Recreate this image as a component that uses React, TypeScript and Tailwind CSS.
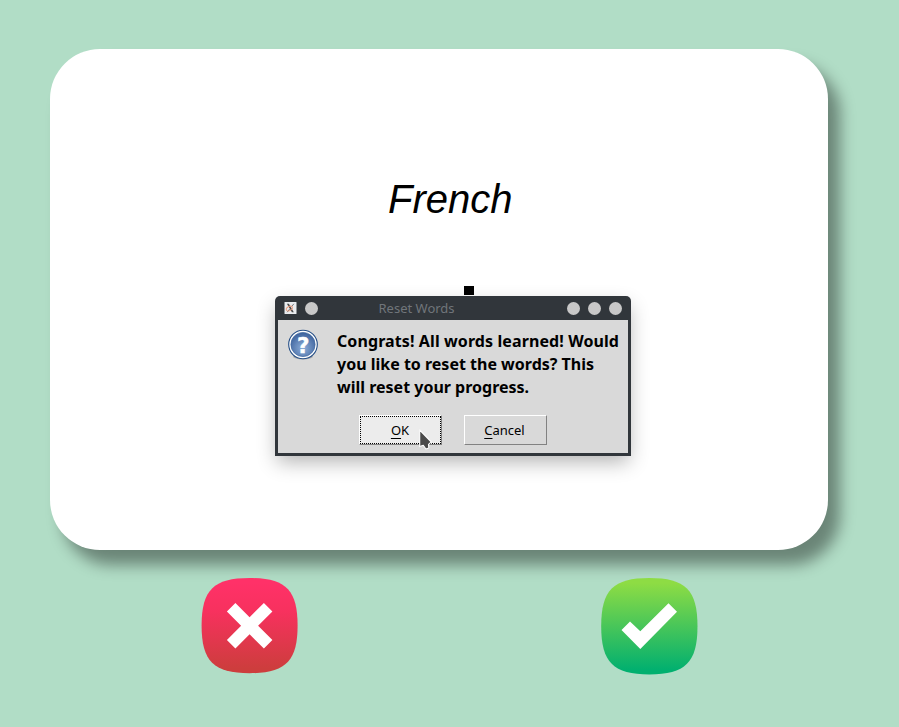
function Dot() {
  return <span className="block size-[13px] rounded-full bg-[#c8c8c8]" />;
}

function ResetDialog() {
  return (
    <div
      role="dialog"
      aria-label="Reset Words"
      className="absolute left-[275px] top-[296px] flex h-[160px] w-[356px] flex-col rounded-t-[5px] bg-[#31363b] px-[3px] pb-[3px] font-['Noto_Sans',sans-serif] shadow-[0_8px_20px_-2px_rgba(0,0,0,0.3)]"
    >
      <div className="flex h-6 shrink-0 items-center pl-[6px] pr-[6px]">
        <svg width="13" height="12" viewBox="-0.5 0 13 12" className="shrink-0">
          <rect width="12" height="12" rx="0.6" fill="#e9ecef" />
          <path d="M2.4 1.8h1.9l5 8.4H7.4z" fill="#4a4a4a" />
          <path d="M9.4 1.8 6.7 5M5.2 7 2.6 10.2" stroke="#4a4a4a" strokeWidth="0.7" />
          <ellipse cx="4.8" cy="6.6" rx="3.3" ry="2.1" transform="rotate(-28 4.8 6.6)" fill="none" stroke="#ee9c7c" strokeWidth="0.9" />
        </svg>
        <span className="ml-[8px]">
          <Dot />
        </span>
        <span className="ml-[60.5px] whitespace-nowrap text-[13px] leading-6 text-[#70757a]">Reset Words</span>
        <div className="ml-auto flex gap-2">
          <Dot />
          <Dot />
          <Dot />
        </div>
      </div>
      <div className="flex flex-1 flex-col bg-[#d9d9d9]">
        <div className="flex pl-[9px] pt-[9px]">
          <svg width="32" height="32" viewBox="0 0 32 32" className="shrink-0">
            <defs>
              <radialGradient id="help" cx="0.5" cy="0.65" r="0.65">
                <stop offset="0" stopColor="#8eafd9" />
                <stop offset="1" stopColor="#3b609b" />
              </radialGradient>
            </defs>
            <ellipse cx="16" cy="27.5" rx="10" ry="3" fill="#000" opacity="0.2" />
            <circle cx="16" cy="15.5" r="14.3" fill="#fff" stroke="#234d86" strokeWidth="1.1" />
            <circle cx="16" cy="15.5" r="12.1" fill="url(#help)" stroke="#3e659e" strokeWidth="0.7" />
            <text x="16.2" y="23.6" textAnchor="middle" fill="#fff" stroke="#fff" strokeWidth="0.4" fontFamily="DejaVu Sans" fontWeight="700" fontSize="21.5">?</text>
          </svg>
          <p className="ml-[18px] whitespace-nowrap pt-px text-[16px] font-bold leading-[23px] text-black">
            <span className="tracking-[0.1px]">Congrats! All words learned! Would</span>
            <br />
            you like to reset the words? This
            <br />
            will reset your progress.
          </p>
        </div>
        <div className="mt-[16px] flex gap-[22px] pl-[81px] text-[13px] leading-none text-black">
          <button className="h-[30px] w-[83px] border border-b-[#828282] border-l-white border-r-[#828282] border-t-white bg-[#ececec]">
            <span className="flex h-full w-full items-center justify-center border border-dotted border-black pr-px">
              <span className="underline decoration-1 underline-offset-[3px]">O</span>K
            </span>
          </button>
          <button className="flex h-[30px] w-[83px] items-center justify-center border border-b-[#828282] border-l-white border-r-[#828282] border-t-white bg-[#d9d9d9] pr-[2px]">
            <span className="underline decoration-1 underline-offset-[3px]">C</span>ancel
          </button>
        </div>
      </div>
    </div>
  );
}

function Pointer() {
  return (
    <svg width="15" height="22" viewBox="0 0 15 22" className="absolute left-[418px] top-[429px]">
      <path d="M1.7 1V17.6L5.3 16.2 7.9 20 10.8 19 10.5 15.3 13.3 13Z" fill="#4b4b4b" stroke="#fff" strokeWidth="1.1" strokeLinejoin="round" />
    </svg>
  );
}

const TILE = "M48 0C84 0 96 12 96 48S84 96 48 96 0 84 0 48 12 0 48 0Z";

export default function App() {
  return (
    <div className="relative flex h-[727px] w-[899px] flex-col overflow-hidden bg-[#b1ddc6]">
      <main className="ml-[50px] mt-[49px] flex h-[501px] w-[777.5px] shrink-0 flex-col items-center rounded-[50px] bg-white pl-[23px] shadow-[12px_15px_15px_0_rgba(0,0,0,0.4)]">
        <h1 className="mt-[127px] font-['Liberation_Sans',Arial,sans-serif] text-[40px] italic leading-[46px] text-black">French</h1>
        <span className="ml-[37px] mt-[64px] block h-[9px] w-[10px] bg-black" />
      </main>
      <div className="mt-[28px] flex gap-[303px] pl-[202px]">
        <button aria-label="Unknown">
          <svg width="96" height="96" viewBox="0 0 96 96" className="overflow-visible">
            <defs>
              <linearGradient id="red" x1="0" y1="0" x2="0" y2="1">
                <stop offset="0.05" stopColor="#ff3168" />
                <stop offset="0.35" stopColor="#f7315e" />
                <stop offset="0.95" stopColor="#cd3d3d" />
              </linearGradient>
            </defs>
            <g transform="translate(-0.4 0)">
              <path d={TILE} fill="url(#red)" transform="scale(1 0.992)" />
              <path d="M33.8 25 48 39.2 62.3 25 70.8 33.5 56.5 47.7 70.8 62 62.3 70.5 48 56.3 33.8 70.5 25.3 62 39.5 47.7 25.3 33.5Z" fill="#fff" />
            </g>
          </svg>
        </button>
        <button aria-label="Known">
          <svg width="96" height="96" viewBox="0 0 96 96" className="overflow-visible">
            <defs>
              <linearGradient id="green" x1="0" y1="0" x2="0" y2="1">
                <stop offset="0.05" stopColor="#8edc44" />
                <stop offset="0.95" stopColor="#02b06f" />
              </linearGradient>
            </defs>
            <path d={TILE} fill="url(#green)" transform="translate(0.2 0.1) scale(1.003)" />
            <path d="M20.5 52 29 43.5 39.3 53.3 67.5 25.2 76 33.8 39.3 71Z" fill="#fff" />
          </svg>
        </button>
      </div>
      <ResetDialog />
      <Pointer />
    </div>
  );
}
